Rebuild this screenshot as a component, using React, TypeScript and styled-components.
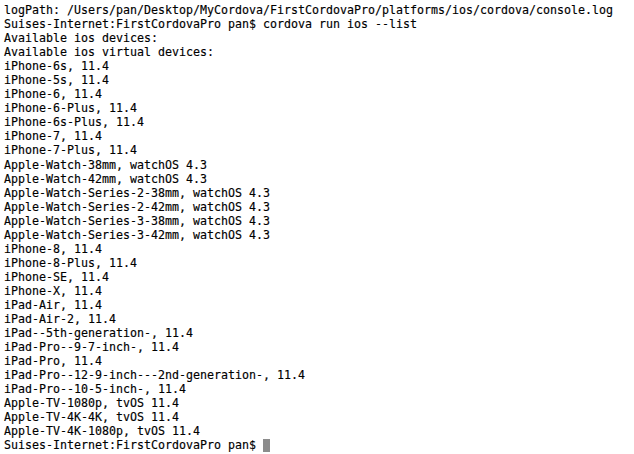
import React from "react";
import styled, { createGlobalStyle } from "styled-components";

const Global = createGlobalStyle`
  html, body { margin: 0; padding: 0; background: #ffffff; }
`;

const Terminal = styled.div`
  width: 634px;
  height: 454px;
  box-sizing: border-box;
  padding: 3px 0 0 4px;
  background: #ffffff;
  color: #000000;
  font-family: "DejaVu Sans Mono", "Liberation Mono", monospace;
  font-size: 11.63px;
  line-height: 14.06px;
  -webkit-text-stroke: 0.15px #000000;
  overflow: hidden;
`;

const Line = styled.div`
  white-space: pre;
  height: 14.06px;
`;

const Cursor = styled.span`
  display: inline-block;
  width: 7px;
  height: 13px;
  background: #8c8c8c;
  vertical-align: -3px;
`;

const lines = [
  "logPath: /Users/pan/Desktop/MyCordova/FirstCordovaPro/platforms/ios/cordova/console.log",
  "Suises-Internet:FirstCordovaPro pan$ cordova run ios --list",
  "Available ios devices:",
  "Available ios virtual devices:",
  "iPhone-6s, 11.4",
  "iPhone-5s, 11.4",
  "iPhone-6, 11.4",
  "iPhone-6-Plus, 11.4",
  "iPhone-6s-Plus, 11.4",
  "iPhone-7, 11.4",
  "iPhone-7-Plus, 11.4",
  "Apple-Watch-38mm, watchOS 4.3",
  "Apple-Watch-42mm, watchOS 4.3",
  "Apple-Watch-Series-2-38mm, watchOS 4.3",
  "Apple-Watch-Series-2-42mm, watchOS 4.3",
  "Apple-Watch-Series-3-38mm, watchOS 4.3",
  "Apple-Watch-Series-3-42mm, watchOS 4.3",
  "iPhone-8, 11.4",
  "iPhone-8-Plus, 11.4",
  "iPhone-SE, 11.4",
  "iPhone-X, 11.4",
  "iPad-Air, 11.4",
  "iPad-Air-2, 11.4",
  "iPad--5th-generation-, 11.4",
  "iPad-Pro--9-7-inch-, 11.4",
  "iPad-Pro, 11.4",
  "iPad-Pro--12-9-inch---2nd-generation-, 11.4",
  "iPad-Pro--10-5-inch-, 11.4",
  "Apple-TV-1080p, tvOS 11.4",
  "Apple-TV-4K-4K, tvOS 11.4",
  "Apple-TV-4K-1080p, tvOS 11.4",
];

export default function App() {
  return (
    <>
      <Global />
      <Terminal>
        {lines.map((l, i) => (
          <Line key={i}>{l}</Line>
        ))}
        <Line>
          {"Suises-Internet:FirstCordovaPro pan$ "}
          <Cursor />
        </Line>
      </Terminal>
    </>
  );
}
